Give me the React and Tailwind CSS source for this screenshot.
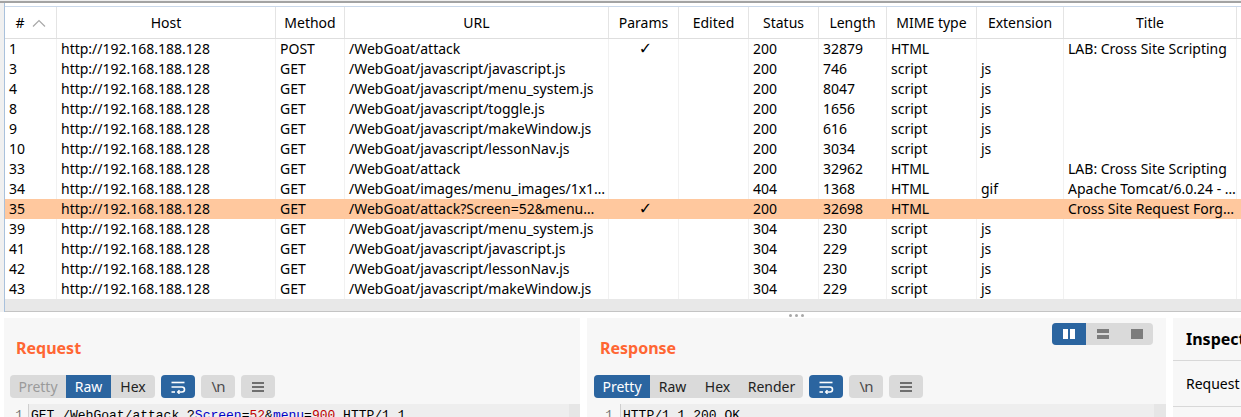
import React from 'react';

const cols = [
  { key: 'id', label: '#', w: 'w-[52px]' },
  { key: 'host', label: 'Host', w: 'w-[219px]' },
  { key: 'method', label: 'Method', w: 'w-[69px]' },
  { key: 'url', label: 'URL', w: 'w-[264px]' },
  { key: 'params', label: 'Params', w: 'w-[70px]' },
  { key: 'edited', label: 'Edited', w: 'w-[70px]' },
  { key: 'status', label: 'Status', w: 'w-[70px]' },
  { key: 'length', label: 'Length', w: 'w-[68px]' },
  { key: 'mime', label: 'MIME type', w: 'w-[90px]' },
  { key: 'ext', label: 'Extension', w: 'w-[87px]' },
  { key: 'title', label: 'Title', w: 'w-[173px]' },
];

const host = 'http://192.168.188.128';

const rows = [
  { id: '1', method: 'POST', url: '/WebGoat/attack', params: true, status: '200', length: '32879', mime: 'HTML', ext: '', title: 'LAB: Cross Site Scripting' },
  { id: '3', method: 'GET', url: '/WebGoat/javascript/javascript.js', status: '200', length: '746', mime: 'script', ext: 'js', title: '' },
  { id: '4', method: 'GET', url: '/WebGoat/javascript/menu_system.js', status: '200', length: '8047', mime: 'script', ext: 'js', title: '' },
  { id: '8', method: 'GET', url: '/WebGoat/javascript/toggle.js', status: '200', length: '1656', mime: 'script', ext: 'js', title: '' },
  { id: '9', method: 'GET', url: '/WebGoat/javascript/makeWindow.js', status: '200', length: '616', mime: 'script', ext: 'js', title: '' },
  { id: '10', method: 'GET', url: '/WebGoat/javascript/lessonNav.js', status: '200', length: '3034', mime: 'script', ext: 'js', title: '' },
  { id: '33', method: 'GET', url: '/WebGoat/attack', status: '200', length: '32962', mime: 'HTML', ext: '', title: 'LAB: Cross Site Scripting' },
  { id: '34', method: 'GET', url: '/WebGoat/images/menu_images/1x1…', status: '404', length: '1368', mime: 'HTML', ext: 'gif', title: 'Apache Tomcat/6.0.24 - …' },
  { id: '35', method: 'GET', url: '/WebGoat/attack?Screen=52&menu…', params: true, status: '200', length: '32698', mime: 'HTML', ext: '', title: 'Cross Site Request Forg…', selected: true },
  { id: '39', method: 'GET', url: '/WebGoat/javascript/menu_system.js', status: '304', length: '230', mime: 'script', ext: 'js', title: '' },
  { id: '41', method: 'GET', url: '/WebGoat/javascript/javascript.js', status: '304', length: '229', mime: 'script', ext: 'js', title: '' },
  { id: '42', method: 'GET', url: '/WebGoat/javascript/lessonNav.js', status: '304', length: '230', mime: 'script', ext: 'js', title: '' },
  { id: '43', method: 'GET', url: '/WebGoat/javascript/makeWindow.js', status: '304', length: '229', mime: 'script', ext: 'js', title: '' },
];

const WrapIcon = () => (
  <svg width="16" height="14" viewBox="0 0 16 14" fill="none" stroke="white" strokeWidth="1.6">
    <path d="M1.5 2.5H14.5" />
    <path d="M1.5 7H12a2.5 2.5 0 0 1 0 5H8" />
    <path d="M9.5 10.3L7.8 12L9.5 13.7" />
    <path d="M1.5 12H5" />
  </svg>
);

const MenuIcon = () => (
  <svg width="14" height="12" viewBox="0 0 14 12" fill="#6e6e6e">
    <rect x="1" y="1" width="12" height="2" />
    <rect x="1" y="5" width="12" height="2" />
    <rect x="1" y="9" width="12" height="2" />
  </svg>
);

const ToolButtons = () => (
  <>
    <div className="w-[34px] h-[23px] rounded-[4px] bg-[#2b65a0] flex items-center justify-center">
      <WrapIcon />
    </div>
    <div className="w-[34px] h-[23px] rounded-[4px] bg-[#dadada] flex items-center justify-center text-[15px] text-[#4a4a4a] tracking-[-1px]">
      {'\\n'}
    </div>
    <div className="w-[34px] h-[23px] rounded-[4px] bg-[#dadada] flex items-center justify-center">
      <MenuIcon />
    </div>
  </>
);

const App = () => {
  return (
    <div className="w-[1241px] h-[417px] overflow-hidden bg-white font-['Noto_Sans',sans-serif] text-[14px] text-black">
      <div className="h-px bg-[#eeeeee]" />
      <div className="h-[2px] bg-[#a3a3a3]" />
      <div className="flex">
        <div className="w-[4px] bg-[#f0f0f0]" />
        <div className="flex-1 border-l border-[#a9c1dc]">
          <div className="h-[3px] bg-white" />
          <div className="h-px bg-[#c9d8ea]" />
          {/* header */}
          <div className="flex h-[32px] border-b border-[#dedede] bg-white">
            {cols.map((c) => (
              <div key={c.key} className={`${c.w} shrink-0 border-r border-[#e4e4e4] flex items-center justify-center gap-[7px]`}>
                <span>{c.label}</span>
                {c.key === 'id' && (
                  <svg width="14" height="8" viewBox="0 0 14 8" fill="none" stroke="#a8a8a8" strokeWidth="1.2">
                    <path d="M1 7.5L7 1.5L13 7.5" />
                  </svg>
                )}
              </div>
            ))}
            <div className="flex-1" />
          </div>
          {/* rows */}
          {rows.map((r) => (
            <div key={r.id} className={`flex h-[20px] ${r.selected ? 'bg-[#ffc89e]' : 'bg-white'}`}>
              {cols.map((c) => {
                const val = c.key === 'host' ? host : r[c.key];
                return (
                  <div
                    key={c.key}
                    className={`${c.w} shrink-0 border-r ${r.selected ? 'border-[#ffc89e]' : 'border-[#f1f1f1]'} pl-[4px] leading-[20px] whitespace-nowrap overflow-hidden ${c.key === 'params' ? 'text-center' : ''}`}
                  >
                    {c.key === 'params' ? (r.params ? <span className="font-['DejaVu_Sans',sans-serif] text-[16px] font-bold">✓</span> : '') : val}
                  </div>
                );
              })}
              <div className="flex-1" />
            </div>
          ))}
          <div className="h-[13px] bg-[#e8e8e8] border-b border-[#c4c4c4]" />
        </div>
      </div>

      {/* divider dots */}
      <div className="h-[6px] flex items-center gap-[3px] pl-[789px]">
        <div className="w-[3px] h-[3px] rounded-full bg-[#a8a8a8]" />
        <div className="w-[3px] h-[3px] rounded-full bg-[#a8a8a8]" />
        <div className="w-[3px] h-[3px] rounded-full bg-[#a8a8a8]" />
      </div>

      {/* editor panels */}
      <div className="flex pl-[4px] gap-[7px]">
        {/* Request */}
        <div className="w-[576px] h-[110px] shrink-0 bg-[#f7f7f7] flex flex-col">
          <div className="h-[40px] pl-[12px] pt-[20px]">
            <div className="text-[16px] leading-[20px] font-bold text-[#ff6633]">Request</div>
          </div>
          <div className="mt-[17px] pl-[6px] flex gap-[6px]">
            <div className="flex h-[23px] rounded-[4px] overflow-hidden bg-[#dadada]">
              <div className="w-[56px] flex items-center justify-center text-[#9a9a9a]">Pretty</div>
              <div className="w-[45px] flex items-center justify-center bg-[#2b65a0] text-white">Raw</div>
              <div className="w-[44px] flex items-center justify-center text-[#222]">Hex</div>
            </div>
            <ToolButtons />
          </div>
          <div className="mt-[6px] flex h-[20px]">
            <div className="w-[24px] text-right pr-[5px] pt-[3px] font-['Liberation_Mono',monospace] text-[13px] leading-[18px] text-[#777]">1</div>
            <div className="w-[541px] bg-[#eeeeee] border-l border-[#cfcfcf] pl-[2px] pt-[3px] font-['Liberation_Mono',monospace] text-[13px] leading-[18px] whitespace-nowrap overflow-hidden text-black">
              GET /WebGoat/attack ?<span className="text-[#0000c8]">Screen</span>=<span className="text-[#c00000]">52</span>&amp;<span className="text-[#0000c8]">menu</span>=<span className="text-[#c00000]">900</span> HTTP/1.1
            </div>
            <div className="flex-1 bg-[#e6e6e6]" />
          </div>
        </div>

        {/* Response */}
        <div className="w-[579px] h-[110px] shrink-0 bg-[#f7f7f7] flex flex-col">
          <div className="h-[40px] flex justify-between items-start">
            <div className="pl-[13px] pt-[20px] text-[16px] leading-[20px] font-bold text-[#ff6633]">Response</div>
            <div className="mt-[5px] mr-[13px] flex h-[22px] rounded-[4px] overflow-hidden bg-[#dadada]">
              <div className="w-[34px] bg-[#2b65a0] flex items-center justify-center">
                <svg width="12" height="10" viewBox="0 0 12 10" fill="white">
                  <rect x="0" y="0" width="5" height="10" />
                  <rect x="7" y="0" width="5" height="10" />
                </svg>
              </div>
              <div className="w-[34px] flex items-center justify-center">
                <svg width="12" height="10" viewBox="0 0 12 10" fill="#7c7c7c">
                  <rect x="0" y="0" width="12" height="4" />
                  <rect x="0" y="6" width="12" height="4" />
                </svg>
              </div>
              <div className="w-[33px] flex items-center justify-center">
                <svg width="12" height="10" viewBox="0 0 12 10" fill="#7c7c7c">
                  <rect x="0" y="0" width="12" height="10" />
                </svg>
              </div>
            </div>
          </div>
          <div className="mt-[17px] pl-[7px] flex gap-[6px]">
            <div className="flex h-[23px] rounded-[4px] overflow-hidden bg-[#dadada] text-[#222]">
              <div className="w-[56px] flex items-center justify-center bg-[#2b65a0] text-white">Pretty</div>
              <div className="w-[45px] flex items-center justify-center">Raw</div>
              <div className="w-[45px] flex items-center justify-center">Hex</div>
              <div className="w-[63px] flex items-center justify-center">Render</div>
            </div>
            <ToolButtons />
          </div>
          <div className="mt-[6px] flex h-[20px]">
            <div className="w-[33px] text-right pr-[7px] pt-[3px] font-['Liberation_Mono',monospace] text-[13px] leading-[18px] text-[#777]">1</div>
            <div className="w-[534px] bg-[#eeeeee] border-l border-[#cfcfcf] pl-[2px] pt-[3px] font-['Liberation_Mono',monospace] text-[13px] leading-[18px] whitespace-nowrap overflow-hidden text-black">
              HTTP/1.1 200 OK
            </div>
            <div className="flex-1 bg-[#e6e6e6]" />
          </div>
        </div>

        {/* Inspector */}
        <div className="flex-1 h-[110px] bg-[#f7f7f7] flex flex-col overflow-hidden">
          <div className="h-[43px] flex items-center pl-[13px] border-b border-[#d8d8d8]">
            <span className="text-[16px] font-bold whitespace-nowrap">Inspector</span>
          </div>
          <div className="h-[46px] flex items-center pl-[13px] border-b border-[#d8d8d8]">
            <span className="whitespace-nowrap">Request attributes</span>
          </div>
        </div>
      </div>
    </div>
  );
};

export default App;
